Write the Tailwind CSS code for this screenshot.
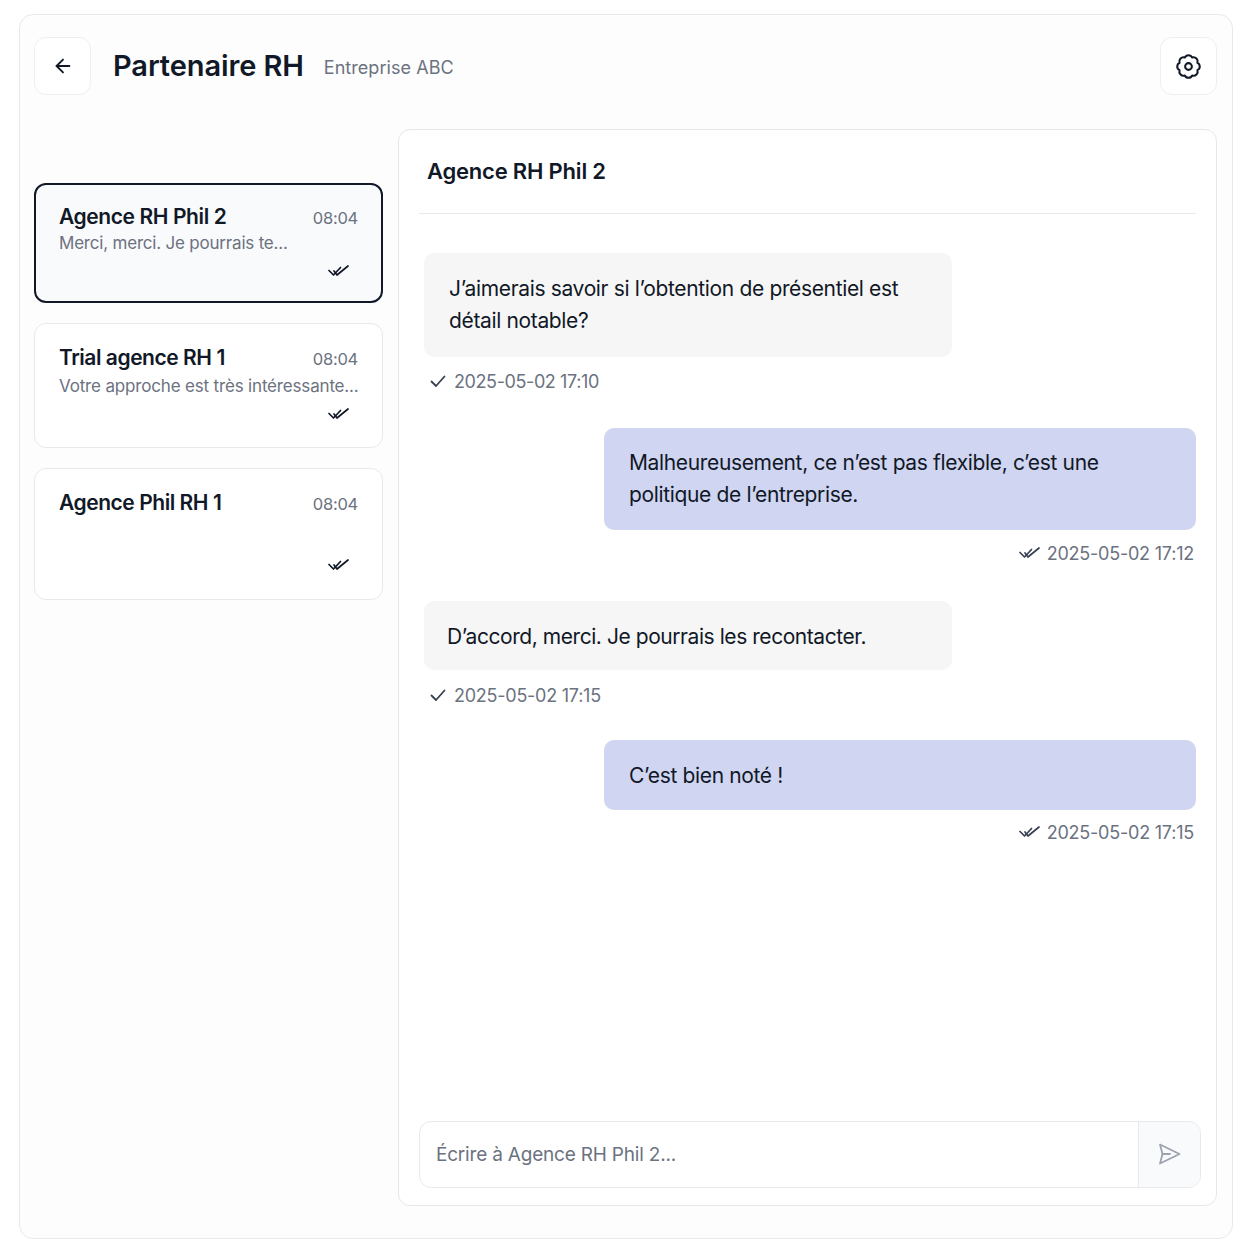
<!DOCTYPE html>
<html lang="fr">
<head>
    <meta charset="UTF-8">
    <meta name="viewport" content="width=device-width, initial-scale=1.0">
    <title>Partenaire RH</title>
    <script src="https://cdn.jsdelivr.net/npm/@tailwindcss/browser@4"></script>
</head>
<body class="bg-white font-['Inter',sans-serif] text-[#111827]">

    <div class="ml-[19px] mt-[14px] w-[1214px] h-[1225px] border border-[#e8e9ec] rounded-[14px] bg-[#fdfdfe] pl-[14px] pr-[15px] pt-[22px]">

        <!-- header -->
        <div class="flex items-center h-[58px]">
            <button class="w-[57px] h-[58px] flex items-center justify-center border border-[#eeeff1] rounded-[12px] bg-white">
                <svg class="w-[22px] h-[22px]" viewBox="0 0 24 24" fill="none" stroke="#111827" stroke-width="2" stroke-linecap="round" stroke-linejoin="round"><path d="M19 12H5"/><path d="M12 19l-7-7 7-7"/></svg>
            </button>
            <h1 class="ml-[22px] text-[29px] font-semibold tracking-[-0.1px] text-[#111827]">Partenaire RH</h1>
            <span class="ml-[20px] mt-[3px] text-[18px] tracking-[0.05px] text-[#6b7280]">Entreprise ABC</span>
            <button class="ml-auto w-[57px] h-[58px] flex items-center justify-center border border-[#eeeff1] rounded-[12px] bg-white">
                <svg class="w-[29px] h-[29px]" viewBox="0 0 24 24" fill="none" stroke="#111827" stroke-width="1.700" stroke-linecap="round" stroke-linejoin="round"><path d="M15.060 4.610A3.400 3.400 0 0 1 19.390 8.940A3.400 3.400 0 0 1 19.390 15.060A3.400 3.400 0 0 1 15.060 19.390A3.400 3.400 0 0 1 8.940 19.390A3.400 3.400 0 0 1 4.610 15.060A3.400 3.400 0 0 1 4.610 8.940A3.400 3.400 0 0 1 8.940 4.610A3.400 3.400 0 0 1 15.060 4.610z"/><circle cx="12" cy="12" r="2.800"/></svg>
            </button>
        </div>

        <div class="flex gap-[15px] mt-[34px]">

            <!-- conversations -->
            <div class="w-[349px] shrink-0 pt-[54px] flex flex-col">
                <div class="h-[120px] border-2 border-[#111827] rounded-[12px] bg-[#f9fafc] pl-[23px] pr-[23px] pt-[18px]">
                    <div class="flex justify-between items-center h-[28px]">
                        <span class="text-[21px] font-semibold tracking-[-0.4px]">Agence RH Phil 2</span>
                        <span class="mt-[3px] text-[16.5px] tracking-[-0.25px] text-[#6b7280]">08:04</span>
                    </div>
                    <p class="text-[17px] tracking-[-0.2px] leading-[24px] text-[#6b7280]">Merci, merci. Je pourrais te...</p>
                    <div class="flex justify-end pr-[8px] mt-[9px]">
                        <svg class="w-[22px] h-[14px]" viewBox="0 0 22 14" fill="none" stroke="#111827" stroke-width="1.700" stroke-linecap="round" stroke-linejoin="round"><path d="M1 6.500l4.500 4.500L12.500 3.500"/><path d="M6 7l3 4 L20 2"/></svg>
                    </div>
                </div>

                <div class="mt-[20px] h-[125px] border border-[#e8e9ec] rounded-[12px] bg-white pl-[24px] pr-[24px] pt-[20px]">
                    <div class="flex justify-between items-center h-[28px]">
                        <span class="text-[21px] font-semibold tracking-[-0.45px]">Trial agence RH 1</span>
                        <span class="mt-[3px] text-[16.5px] tracking-[-0.25px] text-[#6b7280]">08:04</span>
                    </div>
                    <p class="whitespace-nowrap text-[17px] tracking-[-0.17px] leading-[28px] text-[#6b7280]">Votre approche est très intéressante...</p>
                    <div class="flex justify-end pr-[8px] mt-[7px]">
                        <svg class="w-[22px] h-[14px]" viewBox="0 0 22 14" fill="none" stroke="#111827" stroke-width="1.700" stroke-linecap="round" stroke-linejoin="round"><path d="M1 6.500l4.500 4.500L12.500 3.500"/><path d="M6 7l3 4 L20 2"/></svg>
                    </div>
                </div>

                <div class="mt-[20px] h-[132px] border border-[#e8e9ec] rounded-[12px] bg-white pl-[24px] pr-[24px] pt-[20px]">
                    <div class="flex justify-between items-center h-[28px]">
                        <span class="text-[21px] font-semibold tracking-[-0.45px]">Agence Phil RH 1</span>
                        <span class="mt-[3px] text-[16.5px] tracking-[-0.25px] text-[#6b7280]">08:04</span>
                    </div>
                    <div class="flex justify-end pr-[8px] mt-[41px]">
                        <svg class="w-[22px] h-[14px]" viewBox="0 0 22 14" fill="none" stroke="#111827" stroke-width="1.700" stroke-linecap="round" stroke-linejoin="round"><path d="M1 6.500l4.500 4.500L12.500 3.500"/><path d="M6 7l3 4 L20 2"/></svg>
                    </div>
                </div>
            </div>

            <!-- chat -->
            <div class="w-[819px] h-[1077px] border border-[#e5e7eb] rounded-[12px] bg-white px-[20px] flex flex-col">
                <div class="h-[84px] border-b border-[#e8e9ec] flex items-center pl-[8px] pb-[1px]">
                    <h2 class="text-[22px] font-semibold tracking-[-0.2px]">Agence RH Phil 2</h2>
                </div>

                <div class="flex-1 pt-[39px] text-[21px] tracking-[-0.35px] text-[#111827]">
                    <div class="ml-[5px] w-[528px] h-[104px] rounded-[10px] bg-[#f6f6f6] pl-[25px] pr-[20px] pt-[20px] leading-[32px]">J’aimerais savoir si l’obtention de présentiel est détail notable?</div>
                    <div class="ml-[11px] mt-[13px] h-[22px] flex items-center gap-[8px] text-[18px] tracking-[-0.4px] text-[#6b7280]">
                        <svg class="w-[16px] h-[14px]" viewBox="0 0 16 14" fill="none" stroke="#374151" stroke-width="1.800" stroke-linecap="round" stroke-linejoin="round"><path d="M1.500 7.500l4.500 4.500L14.500 2.500"/></svg>
                        <span>2025-05-02 17:10</span>
                    </div>

                    <div class="ml-auto mt-[36px] w-[592px] h-[102px] rounded-[10px] bg-[#d0d5f1] pl-[25px] pr-[20px] pt-[19px] leading-[32px]">Malheureusement, ce n’est pas flexible, c’est une politique de l’entreprise.</div>
                    <div class="mr-[2px] mt-[12px] h-[22px] flex items-center justify-end gap-[6px] text-[18px] tracking-[-0.22px] text-[#6b7280]">
                        <svg class="w-[22px] h-[14px]" viewBox="0 0 22 14" fill="none" stroke="#374151" stroke-width="1.700" stroke-linecap="round" stroke-linejoin="round"><path d="M1 6.500l4.500 4.500L12.500 3.500"/><path d="M6 7l3 4 L20 2"/></svg>
                        <span>2025-05-02 17:12</span>
                    </div>

                    <div class="ml-[5px] mt-[37px] w-[528px] h-[69px] rounded-[10px] bg-[#f6f6f6] pl-[23px] pt-[2px] tracking-[-0.44px] flex items-center">D’accord, merci. Je pourrais les recontacter.</div>
                    <div class="ml-[11px] mt-[14px] h-[22px] flex items-center gap-[8px] text-[18px] tracking-[-0.25px] text-[#6b7280]">
                        <svg class="w-[16px] h-[14px]" viewBox="0 0 16 14" fill="none" stroke="#374151" stroke-width="1.800" stroke-linecap="round" stroke-linejoin="round"><path d="M1.500 7.500l4.500 4.500L14.500 2.500"/></svg>
                        <span>2025-05-02 17:15</span>
                    </div>

                    <div class="ml-auto mt-[34px] w-[592px] h-[70px] rounded-[10px] bg-[#d0d5f1] pl-[25px] pt-[1px] flex items-center">C’est bien noté !</div>
                    <div class="mr-[2px] mt-[11px] h-[22px] flex items-center justify-end gap-[6px] text-[18px] tracking-[-0.22px] text-[#6b7280]">
                        <svg class="w-[22px] h-[14px]" viewBox="0 0 22 14" fill="none" stroke="#374151" stroke-width="1.700" stroke-linecap="round" stroke-linejoin="round"><path d="M1 6.500l4.500 4.500L12.500 3.500"/><path d="M6 7l3 4 L20 2"/></svg>
                        <span>2025-05-02 17:15</span>
                    </div>
                </div>

                <!-- input -->
                <div class="mb-[17px] w-[782px] h-[67px] border border-[#e8e9ec] rounded-[12px] bg-white flex overflow-hidden">
                    <div class="flex-1 pl-[16px] pt-[1px] flex items-center text-[19px] tracking-[-0.2px] text-[#6b7280]">Écrire à Agence RH Phil 2...</div>
                    <div class="w-[62px] border-l border-[#e8e9ec] bg-[#f9fafb] pr-[1px] pb-[2px] flex items-center justify-center">
                        <svg class="w-[24px] h-[24px]" viewBox="0 0 24 24" fill="none" stroke="#9ca3af" stroke-width="1.800" stroke-linecap="round" stroke-linejoin="round"><path d="M3 2.500L22.500 12 3 21.500 5.500 12z"/><path d="M5.500 12H13"/></svg>
                    </div>
                </div>
            </div>
        </div>
    </div>

</body>
</html>
